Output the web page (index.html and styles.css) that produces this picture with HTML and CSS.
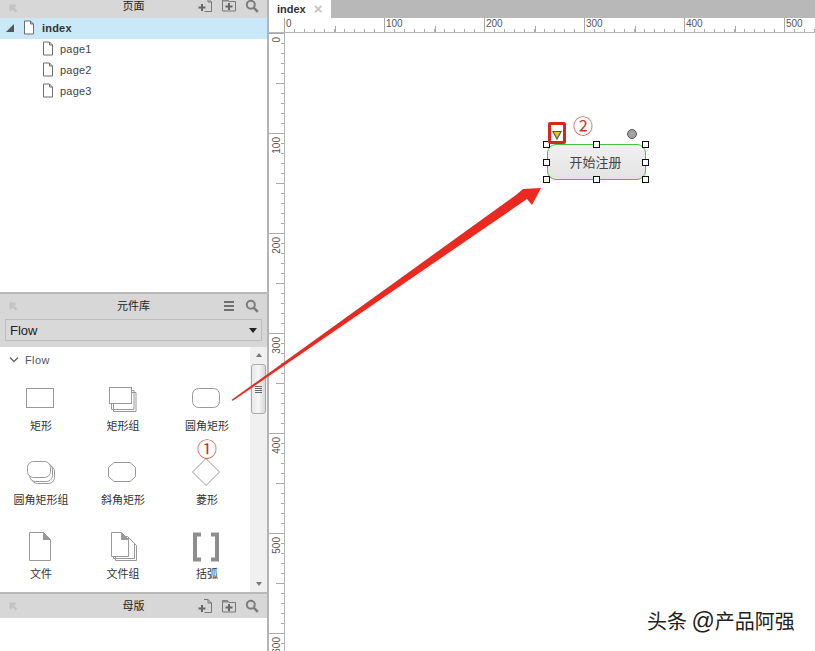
FILE: index.html
```html
<!DOCTYPE html>
<html lang="zh">
<head>
<meta charset="utf-8">
<title>index</title>
<link rel="stylesheet" href="styles.css">
</head>
<body>
<svg class="defs" width="0" height="0" aria-hidden="true">
  <defs>
    <symbol id="i-back" viewBox="0 0 12 12"><path d="M2 2h7v2.400H6l5 5-1.800 1.800-5-5v3H2z" fill="#c4c4c4" stroke="#bbb" stroke-width=".4"/></symbol>
    <symbol id="i-page" viewBox="0 0 12 15"><path d="M1.500 1h6l3 3v10h-9z M7.500 1v3h3" fill="#fff" stroke="#6d6d6d" stroke-width="1"/></symbol>
    <symbol id="i-addpage" viewBox="0 0 16 16"><path d="M7 1.500h4l3.500 3.500v9.500H7.500M11 1.500V5h3.500" fill="none" stroke="#777" stroke-width="1"/><path d="M1.500 10.500h7M5 7v7" stroke="#666" stroke-width="2" fill="none"/></symbol>
    <symbol id="i-addfolder" viewBox="0 0 16 16"><path d="M1.500 14V2.500h5l1.500 2h6.500V14z" fill="none" stroke="#777" stroke-width="1"/><path d="M1.500 2.500h5l1.500 2h-6.500z" fill="#888"/><path d="M4.500 9.500h7M8 6v7" stroke="#666" stroke-width="2" fill="none"/></symbol>
    <symbol id="i-search" viewBox="0 0 14 14"><circle cx="5.800" cy="5.800" r="4" fill="none" stroke="#7c7c7c" stroke-width="2"/><path d="M8.800 8.800l4 4" stroke="#7c7c7c" stroke-width="2.600"/></symbol>
    <symbol id="i-menu" viewBox="0 0 12 12"><path d="M1 2h10M1 6h10M1 10h10" stroke="#6f6f6f" stroke-width="1.800"/></symbol>
  </defs>
</svg>

<div class="app">
  <aside class="side">
    <section class="pages">
      <header class="phead phead-cut">
        <svg class="ic-back"><use href="#i-back"/></svg>
        <span class="ptitle">页面</span>
        <svg class="ic"><use href="#i-addpage"/></svg>
        <svg class="ic"><use href="#i-addfolder"/></svg>
        <svg class="ic ic-s"><use href="#i-search"/></svg>
      </header>
      <div class="row row-root">
        <span class="tri"></span>
        <svg class="pg"><use href="#i-page"/></svg>
        <span class="rname">index</span>
      </div>
      <div class="row row-child"><svg class="pg"><use href="#i-page"/></svg><span>page1</span></div>
      <div class="row row-child"><svg class="pg"><use href="#i-page"/></svg><span>page2</span></div>
      <div class="row row-child"><svg class="pg"><use href="#i-page"/></svg><span>page3</span></div>
    </section>

    <section class="lib">
      <header class="phead">
        <svg class="ic-back"><use href="#i-back"/></svg>
        <span class="ptitle">元件库</span>
        <svg class="ic ic-m"><use href="#i-menu"/></svg>
        <svg class="ic ic-s"><use href="#i-search"/></svg>
      </header>
      <div class="selwrap">
        <div class="select"><span>Flow</span><span class="caret"></span></div>
      </div>
      <div class="libbody">
        <div class="libmain">
          <div class="group"><svg class="chev" viewBox="0 0 10 8"><path d="M1 1.500l4 4 4-4" fill="none" stroke="#666" stroke-width="1.300"/></svg><span>Flow</span></div>
          <div class="grid">
            <div class="item"><svg class="shape" viewBox="0 0 40 36"><rect x="6.500" y="8.500" width="27" height="19" fill="#fff" stroke="#999"/></svg><span>矩形</span></div>
            <div class="item"><svg class="shape" viewBox="0 0 40 36"><path d="M11.500 12.500h22.500v19h-22.500z M9.500 10.500h22.500v19h-22.500z" fill="#fff" stroke="#999"/><rect x="7.500" y="7.500" width="22" height="16" fill="#fff" stroke="#999"/></svg><span>矩形组</span></div>
            <div class="item"><svg class="shape" viewBox="0 0 40 36"><rect x="6.500" y="8.500" width="27" height="19" rx="6" fill="#fff" stroke="#999"/></svg><span>圆角矩形</span></div>
            <div class="item"><svg class="shape" viewBox="0 0 40 36"><rect x="11.500" y="11.500" width="23" height="18" rx="6" fill="#fff" stroke="#999"/><rect x="9.500" y="9.500" width="23" height="18" rx="6" fill="#fff" stroke="#999"/><rect x="7.500" y="7.500" width="23" height="16" rx="6" fill="#fff" stroke="#999"/></svg><span>圆角矩形组</span></div>
            <div class="item"><svg class="shape" viewBox="0 0 40 36"><path d="M12 8.500h16l5.500 5v9l-5.500 5H12l-5.500-5v-9z" fill="#fff" stroke="#999"/></svg><span>斜角矩形</span></div>
            <div class="item"><svg class="shape" viewBox="0 0 40 36"><path d="M20 4.500L33.500 18 20 31.500 6.500 18z" fill="#fff" stroke="#999"/></svg><span>菱形</span></div>
            <div class="item"><svg class="shape" viewBox="0 0 40 36"><path d="M9.500 4.500h14l7 7v21h-21z" fill="#fff" stroke="#999"/><path d="M23 4l8 8h-8z" fill="#999"/></svg><span>文件</span></div>
            <div class="item"><svg class="shape" viewBox="0 0 40 36"><path d="M13.500 10.500h14l7 7v15h-21z M11.500 8.500h14l7 7v15h-21z" fill="#fff" stroke="#999"/><path d="M9.500 4.500h10l7 7v17h-17z" fill="#fff" stroke="#999"/><path d="M19 4l8 8h-8z" fill="#999"/></svg><span>文件组</span></div>
            <div class="item"><svg class="shape" viewBox="0 0 40 36"><path d="M15 6.500H9v25h6M25 6.500h6v25h-6" fill="none" stroke="#8e8e8e" stroke-width="4"/></svg><span>括弧</span></div>
          </div>
        </div>
        <div class="scroll">
          <span class="sup"></span>
          <div class="thumb"><i></i><i></i><i></i><i></i></div>
          <span class="sdown"></span>
        </div>
      </div>
    </section>

    <section class="masters">
      <header class="phead">
        <svg class="ic-back"><use href="#i-back"/></svg>
        <span class="ptitle">母版</span>
        <svg class="ic"><use href="#i-addpage"/></svg>
        <svg class="ic"><use href="#i-addfolder"/></svg>
        <svg class="ic ic-s"><use href="#i-search"/></svg>
      </header>
    </section>
  </aside>

  <main class="work">
    <div class="tabs"><div class="tab"><span>index</span><span class="x">×</span></div></div>
    <div class="rtop">
      <div class="corner"></div>
      <div class="rc"><span>0</span></div><div class="rc"><span>100</span></div><div class="rc"><span>200</span></div><div class="rc"><span>300</span></div><div class="rc"><span>400</span></div><div class="rc"><span>500</span></div>
    </div>
    <div class="below">
      <div class="rleft">
        <div class="rv"><span>0</span></div><div class="rv"><span>100</span></div><div class="rv"><span>200</span></div><div class="rv"><span>300</span></div><div class="rv"><span>400</span></div><div class="rv"><span>500</span></div><div class="rv"><span>600</span></div>
      </div>
      <div class="canvas"></div>
    </div>
  </main>

  <div class="widget"><span>开始注册</span></div>
  <i class="h h1"></i><i class="h h2"></i><i class="h h3"></i><i class="h h4"></i><i class="h h5"></i><i class="h h6"></i><i class="h h7"></i><i class="h h8"></i>
  <i class="rot"></i>
  <div class="redbox"><svg viewBox="0 0 10 10"><path d="M1 1.500h8L5 9z" fill="#f2c230" stroke="#555" stroke-width="1.200"/></svg></div>
  <span class="num n1">①</span>
  <span class="num n2">②</span>
  <svg class="arrow" viewBox="0 0 815 651"><path d="M232 399.500L516 195 523 189 541 188 532 205 527 199 232.500 401z" fill="#ea2a20"/></svg>
  <div class="mark">头条 <span class="at">@</span>产品阿强</div>
</div>
</body>
</html>
```
FILE: styles.css
```css
* { box-sizing: border-box; }
html, body { margin: 0; padding: 0; }
body {
  width: 815px;
  height: 651px;
  overflow: hidden;
  background: #fff;
  font-family: "Liberation Sans", "Noto Sans CJK SC", sans-serif;
  font-size: 11px;
  color: #333;
}
.defs { position: absolute; }
.app { position: relative; display: flex; width: 815px; height: 651px; overflow: hidden; }

/* left column */
.side {
  width: 269px;
  height: 651px;
  flex: none;
  display: flex;
  flex-direction: column;
  border-right: 2px solid #b4b4b4;
}
.pages { height: 292px; flex: none; }
.lib { height: 300px; flex: none; border-top: 2px solid #b8b8b8; display: flex; flex-direction: column; }
.masters { flex: 1; border-top: 2px solid #b8b8b8; }

.phead {
  height: 24px;
  display: flex;
  align-items: center;
  gap: 8px;
  padding: 0 8px;
  background: #d7d7d7;
  position: relative;
}
.phead-cut { height: 18px; align-items: flex-end; padding-bottom: 6px; }
.phead-cut > * { margin-bottom: -1px; }
.ptitle {
  position: absolute;
  left: 0;
  right: 0;
  top: 4px;
  text-align: center;
  font: 11px/14px "Noto Sans CJK SC", sans-serif;
  color: #222;
}
.phead-cut .ptitle { top: -2px; }
.ic-back { width: 10px; height: 10px; margin-right: auto; }
.ic { width: 16px; height: 16px; position: relative; }
.ic-s { width: 14px; height: 14px; }
.ic-m { width: 12px; height: 12px; margin-right: 2px; }

.row {
  height: 21px;
  display: flex;
  align-items: center;
  padding-bottom: 2px;
  font-size: 11px;
  letter-spacing: .2px;
  color: #444;
}
.row-root { background: #c9e8f8; padding-left: 6px; font-weight: bold; color: #333; }
.row-child { padding-left: 42px; }
.pg { width: 12px; height: 15px; flex: none; margin-right: 6px; }
.row-root .pg { margin-left: 8px; margin-right: 7px; }
.tri {
  width: 0;
  height: 0;
  flex: none;
  border-left: 8px solid transparent;
  border-bottom: 8px solid #555;
  margin-right: 1px;
}

.selwrap { height: 29px; background: #d7d7d7; padding: 1px 5px 0; flex: none; }
.select {
  height: 22px;
  display: flex;
  align-items: center;
  justify-content: space-between;
  padding: 0 4px;
  border: 1px solid #bdbdbd;
  background: #d9d9d9;
  font-size: 13px;
  color: #222;
}
.caret { width: 0; height: 0; border: 4px solid transparent; border-top: 5px solid #222; border-bottom: 0; }

.libbody { flex: 1; display: flex; min-height: 0; }
.libmain { width: 250px; flex: none; }
.group {
  height: 26px;
  display: flex;
  align-items: center;
  padding: 0 0 0 9px;
  gap: 6px;
  font-size: 11px;
  letter-spacing: .4px;
  color: #555;
}
.chev { width: 10px; height: 8px; }
.grid {
  display: grid;
  grid-template-columns: 82px 82px 86px;
  grid-auto-rows: 74px;
  margin-top: 7px;
}
.item {
  display: flex;
  flex-direction: column;
  align-items: center;
  font: 11px/15px "Noto Sans CJK SC", sans-serif;
  color: #333;
  height: 60px;
}
.shape { width: 40px; height: 36px; flex: none; margin-bottom: 2px; margin-left: -2px; }

.scroll {
  width: 17px;
  flex: none;
  background: #f0f0f0;
  display: flex;
  flex-direction: column;
  align-items: center;
  padding-top: 6px;
}
.sup { width: 0; height: 0; border: 3.500px solid transparent; border-bottom: 4px solid #777; border-top: 0; }
.thumb {
  width: 15px;
  height: 50px;
  margin-top: 7px;
  border: 1px solid #aaa;
  border-radius: 3px;
  background: linear-gradient(90deg, #e8e8e8, #f6f6f6 50%, #d8d8d8);
  display: flex;
  flex-direction: column;
  align-items: center;
  justify-content: center;
  gap: 1px;
}
.thumb i { width: 7px; height: 1px; background: #666; }
.sdown { width: 0; height: 0; margin-top: auto; margin-bottom: 6px; border: 3.500px solid transparent; border-top: 4px solid #777; border-bottom: 0; }

/* right column */
.work { flex: 1; min-width: 0; display: flex; flex-direction: column; }
.tabs { height: 18px; flex: none; background: #b8b8b8; }
.tab {
  width: 62px;
  height: 18px;
  background: #fff;
  padding-left: 8px;
  display: flex;
  align-items: center;
  gap: 8px;
  font-weight: bold;
  font-size: 11px;
  color: #333;
}
.x { font-weight: bold; font-size: 15px; line-height: 14px; color: #c2c2c2; }

.rtop {
  height: 15px;
  flex: none;
  display: flex;
  border-bottom: 1px solid #b5b5b5;
  overflow: hidden;
  background: #fff;
}
.corner { width: 15px; flex: none; }
.rc {
  width: 100px;
  flex: none;
  padding-left: 1px;
  font-size: 10px;
  line-height: 11px;
  color: #555;
  border-left: 1px solid #aaa;
  background:
    linear-gradient(#aaa, #aaa) 50px 100% / 1px 6px no-repeat,
    repeating-linear-gradient(90deg, #aaa 0 1px, transparent 1px 10px) 9px 100% / 100% 3px no-repeat;
}
.below { flex: 1; min-height: 0; display: flex; }
.rleft {
  width: 16px;
  flex: none;
  border-right: 1px solid #b5b5b5;
  overflow: hidden;
}
.rv {
  height: 100px;
  display: flex;
  align-items: flex-start;
  padding: 3px 0 0 2px;
  border-top: 1px solid #aaa;
  font-size: 10px;
  line-height: 11px;
  color: #555;
  background:
    linear-gradient(#aaa, #aaa) 100% 49px / 8px 1px no-repeat,
    repeating-linear-gradient(180deg, #aaa 0 1px, transparent 1px 10px) 100% 9px / 3px 100% no-repeat;
}
.rv span { writing-mode: vertical-rl; transform: rotate(180deg); }
.canvas { flex: 1; background: #fff; }

/* items on the free canvas */
.widget {
  position: absolute;
  left: 547px;
  top: 144px;
  width: 99px;
  height: 36px;
  padding-right: 2px;
  border: 1px solid #46c046;
  border-radius: 9px;
  background: linear-gradient(#f1f1f1, #e3e3e3);
  display: flex;
  align-items: center;
  justify-content: center;
  font: 13px/16px "Noto Sans CJK SC", sans-serif;
  color: #444;
}
.h { position: absolute; width: 7px; height: 7px; background: #fff; border: 1px solid #111; }
.h1 { left: 543px; top: 141px; }
.h2 { left: 593px; top: 141px; }
.h3 { left: 642px; top: 141px; }
.h4 { left: 543px; top: 159px; }
.h5 { left: 642px; top: 159px; }
.h6 { left: 543px; top: 176px; }
.h7 { left: 593px; top: 176px; }
.h8 { left: 642px; top: 176px; }
.rot { position: absolute; left: 627px; top: 129px; width: 10px; height: 10px; border-radius: 50%; background: #a2a2a2; border: 1px solid #555; }
.redbox {
  position: absolute;
  left: 548px;
  top: 122px;
  width: 18px;
  height: 22px;
  border: 3px solid #d8261c;
  border-radius: 2px;
  display: flex;
  align-items: center;
  justify-content: center;
  padding-top: 4px;
}
.redbox svg { width: 10px; height: 10px; }
.num { position: absolute; color: #c03a30; font: 20px/24px "Noto Sans CJK SC", sans-serif; }
.n1 { left: 197px; top: 437px; }
.n2 { left: 573px; top: 114px; }
.arrow { position: absolute; left: 0; top: 0; width: 815px; height: 651px; pointer-events: none; }
.mark {
  position: absolute;
  left: 647px;
  top: 607px;
  font: 400 20px/28px "Noto Sans CJK SC", sans-serif;
  color: #222;
  white-space: nowrap;
  text-shadow: 1px 1px 0 #fff;
}
.at { font-family: "Liberation Sans", sans-serif; font-size: 23px; }
```
